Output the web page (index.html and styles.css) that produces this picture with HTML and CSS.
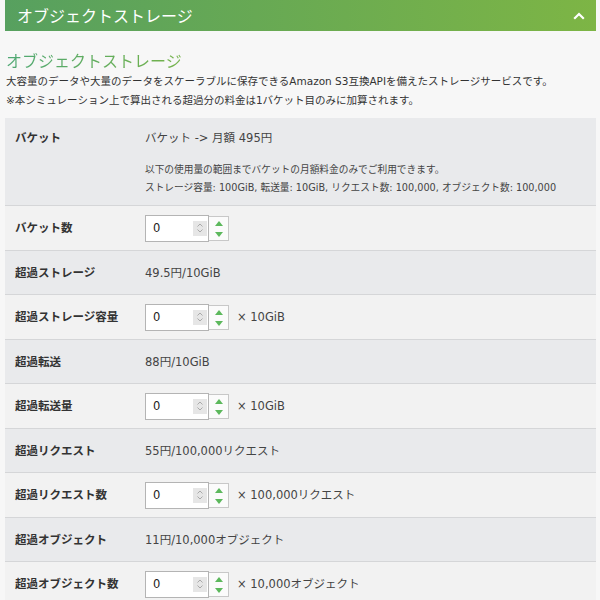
FILE: index.html
```html
<!DOCTYPE html>
<html lang="ja">
<head>
  <meta charset="UTF-8" />
  <meta name="viewport" content="width=device-width, initial-scale=1.0"/>
  <title>オブジェクトストレージ</title>
  <link rel="stylesheet" href="styles.css">
</head>
<body>

  <div class="panel-head">
    <h2>オブジェクトストレージ</h2>
    <svg class="chevron" width="12" height="8" viewBox="0 0 12 8"><polyline points="1.2,6.8 6,2 10.8,6.8" fill="none" stroke="#fff" stroke-width="2.2"/></svg>
  </div>

  <div class="intro">
    <h3>オブジェクトストレージ</h3>
    <p>大容量のデータや大量のデータをスケーラブルに保存できるAmazon S3互換APIを備えたストレージサービスです。</p>
    <p>※本シミュレーション上で算出される超過分の料金は1バケット目のみに加算されます。</p>
  </div>

  <div class="price-list">
    <div class="row gray top">
      <div class="label">バケット</div>
      <div class="value">
        <div class="main">バケット -&gt; 月額 495円</div>
        <p class="note">以下の使用量の範囲までバケットの月額料金のみでご利用できます。<br>ストレージ容量: 100GiB, 転送量: 10GiB, リクエスト数: 100,000, オブジェクト数: 100,000</p>
      </div>
    </div>

    <div class="row light">
      <div class="label">バケット数</div>
      <div class="value qty">
        <div class="num-box"><input type="text" value="0"><span class="spin"><svg width="8" height="12" viewBox="0 0 8 12"><polyline points="1.5,4.5 4,2 6.5,4.5" fill="none" stroke="#a9a9a9"/><polyline points="1.5,7.5 4,10 6.5,7.5" fill="none" stroke="#a9a9a9"/></svg></span></div>
        <div class="step"><span class="up"></span><span class="down"></span></div>
      </div>
    </div>

    <div class="row gray">
      <div class="label">超過ストレージ</div>
      <div class="value">49.5円/10GiB</div>
    </div>

    <div class="row light">
      <div class="label">超過ストレージ容量</div>
      <div class="value qty">
        <div class="num-box"><input type="text" value="0"><span class="spin"><svg width="8" height="12" viewBox="0 0 8 12"><polyline points="1.5,4.5 4,2 6.5,4.5" fill="none" stroke="#a9a9a9"/><polyline points="1.5,7.5 4,10 6.5,7.5" fill="none" stroke="#a9a9a9"/></svg></span></div>
        <div class="step"><span class="up"></span><span class="down"></span></div>
        <span class="unit">× 10GiB</span>
      </div>
    </div>

    <div class="row gray">
      <div class="label">超過転送</div>
      <div class="value">88円/10GiB</div>
    </div>

    <div class="row light">
      <div class="label">超過転送量</div>
      <div class="value qty">
        <div class="num-box"><input type="text" value="0"><span class="spin"><svg width="8" height="12" viewBox="0 0 8 12"><polyline points="1.5,4.5 4,2 6.5,4.5" fill="none" stroke="#a9a9a9"/><polyline points="1.5,7.5 4,10 6.5,7.5" fill="none" stroke="#a9a9a9"/></svg></span></div>
        <div class="step"><span class="up"></span><span class="down"></span></div>
        <span class="unit">× 10GiB</span>
      </div>
    </div>

    <div class="row gray">
      <div class="label">超過リクエスト</div>
      <div class="value">55円/100,000リクエスト</div>
    </div>

    <div class="row light">
      <div class="label">超過リクエスト数</div>
      <div class="value qty">
        <div class="num-box"><input type="text" value="0"><span class="spin"><svg width="8" height="12" viewBox="0 0 8 12"><polyline points="1.5,4.5 4,2 6.5,4.5" fill="none" stroke="#a9a9a9"/><polyline points="1.5,7.5 4,10 6.5,7.5" fill="none" stroke="#a9a9a9"/></svg></span></div>
        <div class="step"><span class="up"></span><span class="down"></span></div>
        <span class="unit">× 100,000リクエスト</span>
      </div>
    </div>

    <div class="row gray">
      <div class="label">超過オブジェクト</div>
      <div class="value">11円/10,000オブジェクト</div>
    </div>

    <div class="row light">
      <div class="label">超過オブジェクト数</div>
      <div class="value qty">
        <div class="num-box"><input type="text" value="0"><span class="spin"><svg width="8" height="12" viewBox="0 0 8 12"><polyline points="1.5,4.5 4,2 6.5,4.5" fill="none" stroke="#a9a9a9"/><polyline points="1.5,7.5 4,10 6.5,7.5" fill="none" stroke="#a9a9a9"/></svg></span></div>
        <div class="step"><span class="up"></span><span class="down"></span></div>
        <span class="unit">× 10,000オブジェクト</span>
      </div>
    </div>
  </div>

</body>
</html>
```

FILE: styles.css
```css
body { font-family: "DejaVu Sans", "Noto Sans CJK JP", sans-serif; margin: 0; padding: 0 4px 0 5px; background: #f7f7f7; color: #333; }

.panel-head { display: flex; align-items: center; justify-content: space-between; height: 31px; padding: 0 11px 0 12px; background: linear-gradient(to right, #57a05f, #7db545); }
.panel-head h2 { margin: 0; font-family: "Noto Sans CJK JP", sans-serif; font-size: 16px; font-weight: normal; color: #fff; line-height: 31px; }
.panel-head .chevron { display: block; }

.intro { padding: 19px 0 8px 1px; }
.intro h3 { margin: 0; font-family: "Noto Sans CJK JP", sans-serif; font-size: 16px; font-weight: normal; line-height: 20px; color: #5aa865; background: linear-gradient(to right, #4fa874, #74b24a); -webkit-background-clip: text; background-clip: text; -webkit-text-fill-color: transparent; display: inline-block; }
.intro p { margin: 0; font-size: 10.5px; line-height: 19px; }
.intro h3 + p { margin-top: 1px; }

.price-list { font-size: 11.5px; }
.row { display: flex; align-items: center; box-sizing: border-box; border-top: 1px solid #d5d6d8; }
.row.top { border-top: none; align-items: flex-start; height: 87px; padding-top: 10px; }
.row.gray { background: #e9eaec; height: 44px; }
.row.top.gray { height: 87px; }
.row.light { background: #f2f2f2; height: 45px; }
.row .label { width: 140px; padding-left: 10px; box-sizing: border-box; font-weight: bold; color: #333; line-height: 20px; }
.row .value { flex: 1; color: #444; line-height: 20px; }
.row .main { line-height: 20px; }
.row .note { margin: 13px 0 0; font-size: 9.7px; line-height: 17.5px; color: #444; }

.qty { display: flex; align-items: center; }
.num-box { display: flex; align-items: center; width: 64px; height: 27px; box-sizing: border-box; border: 1px solid #b4b4b4; background: #fff; }
.num-box input { width: 36px; border: none; outline: none; padding: 0 0 0 7px; margin: 0; font-family: "DejaVu Sans", sans-serif; font-size: 11.5px; color: #222; background: transparent; }
.num-box .spin { display: flex; align-items: center; justify-content: center; width: 14px; height: 15px; margin-left: 4px; background: #e6e6e6; }
.num-box .spin svg { display: block; }
.step { display: flex; flex-direction: column; justify-content: space-between; align-items: center; width: 20px; height: 25px; box-sizing: border-box; border: 1px solid #c8c8c8; border-left: none; background: #fbfbfb; padding: 4px 0 3px; }
.step span { width: 0; height: 0; border-left: 4px solid transparent; border-right: 4px solid transparent; }
.step .up { border-bottom: 5px solid #5cb85c; }
.step .down { border-top: 5px solid #5cb85c; }
.unit { margin-left: 8px; color: #444; }
```
